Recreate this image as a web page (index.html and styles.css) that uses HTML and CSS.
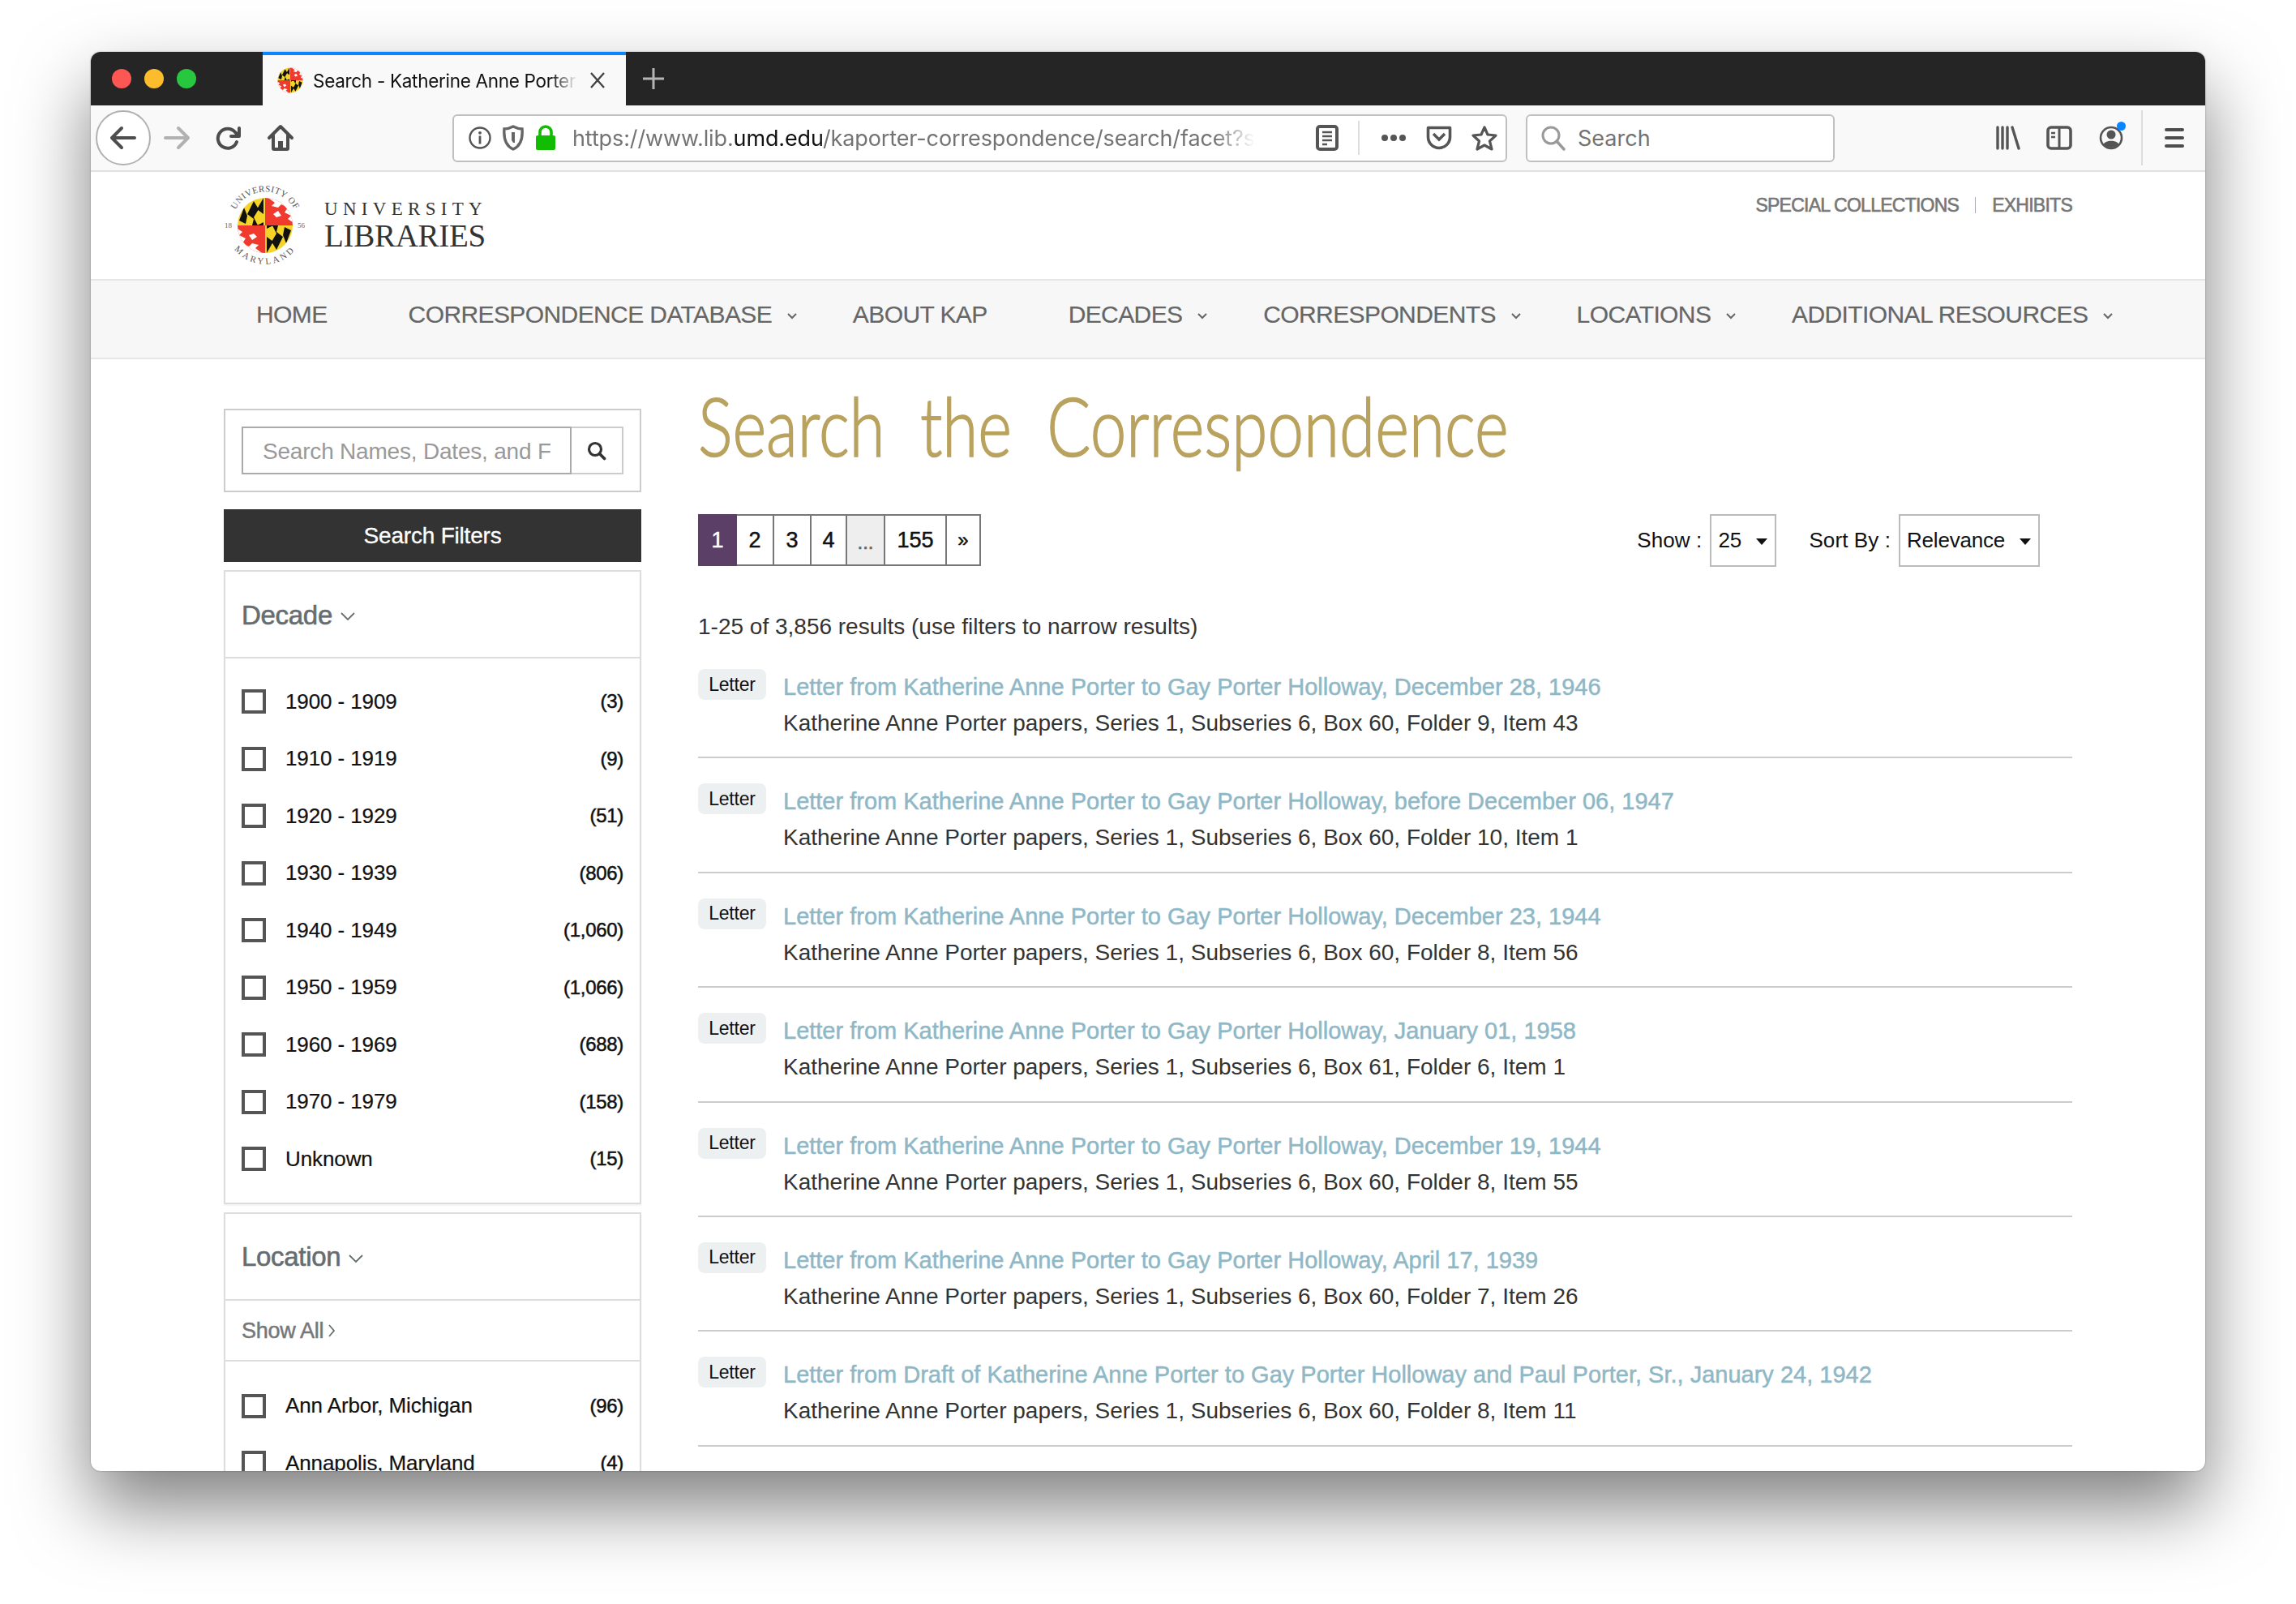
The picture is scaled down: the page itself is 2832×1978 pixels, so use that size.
FILE: index.html
```html
<!DOCTYPE html>
<html lang="en">
<head>
  <meta charset="UTF-8">
  <title>Search - Katherine Anne Porter</title>
  <link rel="stylesheet" href="styles.css">
</head>
<body>
  <svg class="defs" width="0" height="0">
    <defs>
      <clipPath id="globeClip"><circle cx="0" cy="0" r="34"/></clipPath>
      <symbol id="globe" viewBox="-35 -35 70 70">
        <g clip-path="url(#globeClip)">
          <rect x="-35" y="-35" width="35" height="35" fill="#f5d327"/>
          <rect x="0" y="0" width="35" height="35" fill="#f5d327"/>
          <rect x="0" y="-35" width="35" height="35" fill="#ef3a2d"/>
          <rect x="-35" y="0" width="35" height="35" fill="#ef3a2d"/>
          <path d="M-2-34L-10-20-2-14V-4L-10 0H-2L-2-34ZM-14-30L-22-14-14-8-16 0H-9L-14-10-8-20ZM-26-22L-32-6-24-2-22-12Z" fill="#111"/>
          <path d="M2 34L10 20 2 14V4L10 0H2L2 34ZM14 30L22 14 14 8 16 0H9L14 10 8 20ZM26 22L32 6 24 2 22 12Z" fill="#111"/>
          <path d="M4-34L12-28 8-24 16-22 20-26 28-22 24-16 32-12 28-8 34-4V-34ZM10-14L16-18 20-12 14-10Z" fill="#fff"/>
          <path d="M-4 34L-12 28-8 24-16 22-20 26-28 22-24 16-32 12-28 8-34 4V34ZM-10 14L-16 18-20 12-14 10Z" fill="#fff"/>
        </g>
      </symbol>
    </defs>
  </svg>

  <div class="window">
    <div class="tabbar">
      <div class="traffic">
        <span class="light red"></span>
        <span class="light amber"></span>
        <span class="light green"></span>
      </div>
      <div class="tab">
        <svg class="favicon" width="32" height="32"><use href="#globe"/></svg>
        <span class="tab-title">Search - Katherine Anne Porter</span>
        <svg class="tab-close" width="22" height="22" viewBox="0 0 22 22"><path d="M3 2l16 18M19 2L3 20"/></svg>
      </div>
      <svg class="tab-new" width="28" height="28" viewBox="0 0 28 28"><path d="M14 1v26M1 14h26"/></svg>
    </div>

    <div class="toolbar">
      <div class="back-btn">
        <svg width="34" height="30" viewBox="0 0 34 30"><path class="ico" d="M3 15h28M15 3L3 15l12 12"/></svg>
      </div>
      <div class="slot">
        <svg width="34" height="30" viewBox="0 0 34 30"><path class="ico faded" d="M3 15h28M19 3l12 12-12 12"/></svg>
      </div>
      <div class="slot">
        <svg width="32" height="30" viewBox="0 0 32 30"><path class="ico" d="M26 20a12 12 0 1 1-2-12l4 4M29 3v10H19"/></svg>
      </div>
      <div class="slot">
        <svg width="34" height="34" viewBox="0 0 34 34"><path class="ico" d="M3 17L17 3l14 14M8 14v16a1 1 0 0 0 1 1h16a1 1 0 0 0 1-1V14"/><rect x="14" y="21" width="6" height="10" fill="#4d4d4d"/></svg>
      </div>

      <div class="urlbar">
        <svg class="url-ico" width="28" height="28" viewBox="0 0 28 28"><circle cx="14" cy="14" r="12.5" fill="none" stroke="#555" stroke-width="2.4"/><rect x="12.6" y="11.5" width="2.8" height="10" fill="#555"/><circle cx="14" cy="7.8" r="1.9" fill="#555"/></svg>
        <svg class="url-ico" width="26" height="32" viewBox="0 0 26 32"><path d="M13 2c4 2 8 3 11 3 1 12-2 21-11 25C4 26 1 17 2 5c3 0 7-1 11-3z" fill="none" stroke="#666" stroke-width="3.4"/><path d="M11 9h4v13h-2l-2-3z" fill="#666"/></svg>
        <svg class="url-ico" width="26" height="32" viewBox="0 0 26 32"><path d="M6 14V9a7 7 0 0 1 14 0v5" fill="none" stroke="#12bc00" stroke-width="3.6"/><rect x="1" y="13" width="24" height="18" rx="2" fill="#12bc00"/></svg>
        <span class="url-text">https://www.lib.<b>umd.edu</b>/kaporter-correspondence/search/facet?s</span>
        <svg class="url-ico reader" width="28" height="32" viewBox="0 0 28 32"><rect x="2" y="2" width="24" height="28" rx="3" fill="none" stroke="#555" stroke-width="4"/><path d="M8 9h12M8 14h12M8 19h12M8 24h6" stroke="#555" stroke-width="2.4"/></svg>
        <span class="url-sep"></span>
        <svg class="url-ico dots" width="32" height="10" viewBox="0 0 32 10"><circle cx="5" cy="5" r="4" fill="#555"/><circle cx="16" cy="5" r="4" fill="#555"/><circle cx="27" cy="5" r="4" fill="#555"/></svg>
        <svg class="url-ico pocket" width="32" height="30" viewBox="0 0 32 30"><path d="M2.500 2.500h27v11.500a13.500 13.500 0 0 1-27 0z" fill="none" stroke="#555" stroke-width="3.6" stroke-linejoin="round"/><path d="M9 10l7 7 7-7" fill="none" stroke="#555" stroke-width="3.4"/></svg>
        <svg class="url-ico star" width="32" height="32" viewBox="0 0 32 32"><path d="M16 3l4 9 10 1-7.500 7 2.500 10-9-5-9 5 2.500-10L2 13l10-1z" fill="none" stroke="#555" stroke-width="3.2" stroke-linejoin="round"/></svg>
      </div>

      <div class="searchbar">
        <svg width="32" height="32" viewBox="0 0 32 32"><circle cx="13" cy="13" r="10" fill="none" stroke="#999" stroke-width="3"/><path d="M20 20l9 10" stroke="#999" stroke-width="3.400" stroke-linecap="round"/></svg>
        <span>Search</span>
      </div>

      <div class="tool-right">
        <svg width="32" height="30" viewBox="0 0 32 30"><path d="M3 2v26M9 2v26M15 2v26M21 2l8 26" fill="none" stroke="#555" stroke-width="3.4" stroke-linecap="round"/></svg>
        <svg width="32" height="30" viewBox="0 0 32 30"><rect x="2" y="2" width="28" height="26" rx="4" fill="none" stroke="#555" stroke-width="3.6"/><path d="M16 2v26" stroke="#555" stroke-width="3"/><path d="M6 9h5M6 14h5" stroke="#555" stroke-width="2.400"/></svg>
        <span class="account">
          <svg width="30" height="30" viewBox="0 0 30 30"><circle cx="15" cy="15" r="13" fill="none" stroke="#555" stroke-width="2.600"/><circle cx="15" cy="11" r="5.500" fill="#555"/><path d="M5 24c2-7 18-7 20 0-5 4-15 4-20 0z" fill="#555"/></svg>
          <span class="badge-dot"></span>
        </span>
        <span class="tool-sep"></span>
        <div class="burger"><span></span><span></span><span></span></div>
      </div>
    </div>

    <div class="site-header">
      <div class="logo">
        <svg class="seal" width="100" height="100" viewBox="-50 -50 100 100">
          <defs>
            <path id="arcTop" d="M-39 12A41 41 0 1 1 39 12"/>
            <path id="arcBottom" d="M-46-14A48 48 0 1 0 46-14"/>
          </defs>
          <use href="#globe" x="-35" y="-35" width="70" height="70"/>
          <text class="seal-text"><textPath href="#arcTop" startOffset="50%" text-anchor="middle">UNIVERSITY OF</textPath></text>
          <text class="seal-text seal-text-low"><textPath href="#arcBottom" startOffset="50%" text-anchor="middle">MARYLAND</textPath></text>
          <text class="seal-year" x="-50" y="3">18</text>
          <text class="seal-year" x="40" y="3">56</text>
        </svg>
        <div class="logo-text">
          <div class="logo-uni">UNIVERSITY</div>
          <div class="logo-lib">LIBRARIES</div>
        </div>
      </div>
      <div class="top-links">
        <a>SPECIAL COLLECTIONS</a>
        <span class="pipe"></span>
        <a>EXHIBITS</a>
      </div>
    </div>

    <div class="nav">
      <a class="nav-link">HOME</a>
      <a class="nav-link drop">CORRESPONDENCE DATABASE <svg class="caret" width="12" height="8" viewBox="0 0 12 8"><path d="M1 1l5 5 5-5"/></svg></a>
      <a class="nav-link">ABOUT KAP</a>
      <a class="nav-link drop">DECADES <svg class="caret" width="12" height="8" viewBox="0 0 12 8"><path d="M1 1l5 5 5-5"/></svg></a>
      <a class="nav-link drop">CORRESPONDENTS <svg class="caret" width="12" height="8" viewBox="0 0 12 8"><path d="M1 1l5 5 5-5"/></svg></a>
      <a class="nav-link drop">LOCATIONS <svg class="caret" width="12" height="8" viewBox="0 0 12 8"><path d="M1 1l5 5 5-5"/></svg></a>
      <a class="nav-link drop">ADDITIONAL RESOURCES <svg class="caret" width="12" height="8" viewBox="0 0 12 8"><path d="M1 1l5 5 5-5"/></svg></a>
    </div>

    <div class="content">
      <div class="sidebar">
        <div class="search-box">
          <input class="search-input" type="text" placeholder="Search Names, Dates, and Full Text">
          <div class="search-btn">
            <svg width="24" height="24" viewBox="0 0 24 24"><circle cx="10" cy="10" r="7.500" fill="none" stroke="#333" stroke-width="3.200"/><path d="M15.500 15.500l6 6" stroke="#333" stroke-width="3.800" stroke-linecap="round"/></svg>
          </div>
        </div>
        <div class="filters-title">Search Filters</div>

        <div class="panel">
          <div class="panel-head">Decade <svg class="panel-caret" width="18" height="11" viewBox="0 0 18 11"><path d="M1 1l8 8 8-8"/></svg></div>
          <div class="panel-list">
            <div class="facet"><span class="check"></span><span class="facet-name">1900 - 1909</span><span class="facet-count">(3)</span></div>
            <div class="facet"><span class="check"></span><span class="facet-name">1910 - 1919</span><span class="facet-count">(9)</span></div>
            <div class="facet"><span class="check"></span><span class="facet-name">1920 - 1929</span><span class="facet-count">(51)</span></div>
            <div class="facet"><span class="check"></span><span class="facet-name">1930 - 1939</span><span class="facet-count">(806)</span></div>
            <div class="facet"><span class="check"></span><span class="facet-name">1940 - 1949</span><span class="facet-count">(1,060)</span></div>
            <div class="facet"><span class="check"></span><span class="facet-name">1950 - 1959</span><span class="facet-count">(1,066)</span></div>
            <div class="facet"><span class="check"></span><span class="facet-name">1960 - 1969</span><span class="facet-count">(688)</span></div>
            <div class="facet"><span class="check"></span><span class="facet-name">1970 - 1979</span><span class="facet-count">(158)</span></div>
            <div class="facet"><span class="check"></span><span class="facet-name">Unknown</span><span class="facet-count">(15)</span></div>
          </div>
        </div>

        <div class="panel">
          <div class="panel-head">Location <svg class="panel-caret" width="18" height="11" viewBox="0 0 18 11"><path d="M1 1l8 8 8-8"/></svg></div>
          <div class="panel-showall">Show All <svg class="showall-caret" width="9" height="16" viewBox="0 0 9 16"><path d="M1 1l6 7-6 7"/></svg></div>
          <div class="panel-list">
            <div class="facet"><span class="check"></span><span class="facet-name">Ann Arbor, Michigan</span><span class="facet-count">(96)</span></div>
            <div class="facet"><span class="check"></span><span class="facet-name">Annapolis, Maryland</span><span class="facet-count">(4)</span></div>
          </div>
        </div>
      </div>

      <div class="main">
        <h1 class="page-title">Search the Correspondence</h1>

        <div class="controls">
          <div class="pager">
            <a class="page active">1</a>
            <a class="page p2">2</a>
            <a class="page p3">3</a>
            <a class="page p4">4</a>
            <a class="page gap">...</a>
            <a class="page p155">155</a>
            <a class="page next">»</a>
          </div>
          <div class="sorters">
            <span class="sort-label">Show :</span>
            <div class="pick pick-show">25<span class="tri"></span></div>
            <span class="sort-label sort-by">Sort By :</span>
            <div class="pick pick-sort">Relevance<span class="tri"></span></div>
          </div>
        </div>

        <div class="result-count">1-25 of 3,856 results (use filters to narrow results)</div>

        <div class="result">
          <span class="type">Letter</span>
          <div class="result-body">
            <a class="result-title">Letter from Katherine Anne Porter to Gay Porter Holloway, December 28, 1946</a>
            <div class="result-sub">Katherine Anne Porter papers, Series 1, Subseries 6, Box 60, Folder 9, Item 43</div>
          </div>
        </div>
        <div class="result">
          <span class="type">Letter</span>
          <div class="result-body">
            <a class="result-title">Letter from Katherine Anne Porter to Gay Porter Holloway, before December 06, 1947</a>
            <div class="result-sub">Katherine Anne Porter papers, Series 1, Subseries 6, Box 60, Folder 10, Item 1</div>
          </div>
        </div>
        <div class="result">
          <span class="type">Letter</span>
          <div class="result-body">
            <a class="result-title">Letter from Katherine Anne Porter to Gay Porter Holloway, December 23, 1944</a>
            <div class="result-sub">Katherine Anne Porter papers, Series 1, Subseries 6, Box 60, Folder 8, Item 56</div>
          </div>
        </div>
        <div class="result">
          <span class="type">Letter</span>
          <div class="result-body">
            <a class="result-title">Letter from Katherine Anne Porter to Gay Porter Holloway, January 01, 1958</a>
            <div class="result-sub">Katherine Anne Porter papers, Series 1, Subseries 6, Box 61, Folder 6, Item 1</div>
          </div>
        </div>
        <div class="result">
          <span class="type">Letter</span>
          <div class="result-body">
            <a class="result-title">Letter from Katherine Anne Porter to Gay Porter Holloway, December 19, 1944</a>
            <div class="result-sub">Katherine Anne Porter papers, Series 1, Subseries 6, Box 60, Folder 8, Item 55</div>
          </div>
        </div>
        <div class="result">
          <span class="type">Letter</span>
          <div class="result-body">
            <a class="result-title">Letter from Katherine Anne Porter to Gay Porter Holloway, April 17, 1939</a>
            <div class="result-sub">Katherine Anne Porter papers, Series 1, Subseries 6, Box 60, Folder 7, Item 26</div>
          </div>
        </div>
        <div class="result">
          <span class="type">Letter</span>
          <div class="result-body">
            <a class="result-title">Letter from Draft of Katherine Anne Porter to Gay Porter Holloway and Paul Porter, Sr., January 24, 1942</a>
            <div class="result-sub">Katherine Anne Porter papers, Series 1, Subseries 6, Box 60, Folder 8, Item 11</div>
          </div>
        </div>
        <div class="result result-cut">
          <span class="type"></span>
        </div>
      </div>
    </div>
  </div>
</body>
</html>
```

FILE: styles.css
```css
html, body {
  margin: 0;
  background: #fff;
}
body {
  padding: 64px 112px;
  height: 1978px;
  box-sizing: border-box;
  overflow: hidden;
  font-family: "Liberation Sans", Arial, sans-serif;
}
.defs {
  position: absolute;
}
.window {
  height: 1750px;
  overflow: hidden;
  background: #fff;
  border-radius: 12px;
  box-shadow: 0 44px 90px rgba(0, 0, 0, 0.5), 0 0 2px rgba(0, 0, 0, 0.4);
}

/* browser chrome */
.tabbar {
  height: 66px;
  background: #252525;
  display: flex;
  align-items: stretch;
}
.traffic {
  width: 212px;
  display: flex;
  align-items: center;
  gap: 16px;
  padding-left: 26px;
  box-sizing: border-box;
}
.light {
  width: 24px;
  height: 24px;
  border-radius: 50%;
}
.red { background: #fc5753; }
.amber { background: #fdbc2c; }
.green { background: #27c83f; }
.tab {
  width: 448px;
  background: #f9f9f9;
  border-top: 4px solid #0a84ff;
  box-sizing: border-box;
  display: flex;
  align-items: center;
  padding-left: 18px;
}
.favicon {
  flex: none;
}
.tab-title {
  margin-left: 12px;
  width: 326px;
  flex: none;
  overflow: hidden;
  white-space: nowrap;
  font-family: Inter, "Liberation Sans", sans-serif;
  font-size: 22.5px;
  letter-spacing: -0.3px;
  color: #111;
  -webkit-mask-image: linear-gradient(to right, #000 90%, transparent);
  mask-image: linear-gradient(to right, #000 90%, transparent);
}
.tab-close {
  margin-left: 14px;
  flex: none;
}
.tab-close path {
  fill: none;
  stroke: #444;
  stroke-width: 2.4;
}
.tab-new {
  align-self: center;
  margin-left: 20px;
}
.tab-new path {
  fill: none;
  stroke: #b5b5b5;
  stroke-width: 3;
}
.toolbar {
  height: 82px;
  box-sizing: border-box;
  background: #f9f9f9;
  border-bottom: 2px solid #e1e1e1;
  display: flex;
  align-items: center;
  padding-left: 6px;
}
.back-btn {
  width: 68px;
  height: 68px;
  box-sizing: border-box;
  border: 2px solid #b1b1b1;
  border-radius: 50%;
  background: #fff;
  display: flex;
  align-items: center;
  justify-content: center;
  flex: none;
}
.slot {
  width: 64px;
  display: flex;
  justify-content: center;
  flex: none;
}
.ico {
  fill: none;
  stroke: #4d4d4d;
  stroke-width: 4;
  stroke-linecap: round;
  stroke-linejoin: round;
}
.ico.faded {
  stroke: #b1b1b1;
}
.urlbar {
  margin-left: 180px;
  width: 1301px;
  height: 59px;
  box-sizing: border-box;
  flex: none;
  background: #fff;
  border: 2px solid #c0c0c0;
  border-radius: 6px;
  display: flex;
  align-items: center;
  padding-left: 18px;
}
.url-ico {
  flex: none;
  margin-right: 14px;
}
.url-text {
  width: 842px;
  flex: none;
  margin-left: 6px;
  overflow: hidden;
  white-space: nowrap;
  font-family: Inter, "Liberation Sans", sans-serif;
  font-size: 27px;
  letter-spacing: -0.12px;
  color: #737373;
  -webkit-mask-image: linear-gradient(to right, #000 94%, transparent);
  mask-image: linear-gradient(to right, #000 94%, transparent);
}
.url-text b {
  font-weight: 400;
  color: #111;
}
.reader {
  margin-left: 75px;
  margin-right: 24px;
}
.url-sep {
  width: 2px;
  height: 42px;
  background: #ddd;
  flex: none;
  margin-right: 26px;
}
.dots {
  margin-right: 24px;
}
.pocket {
  margin-right: 24px;
}
.star {
  margin-right: 0;
}
.searchbar {
  margin-left: 23px;
  width: 381px;
  height: 59px;
  box-sizing: border-box;
  flex: none;
  background: #fff;
  border: 2px solid #c0c0c0;
  border-radius: 6px;
  display: flex;
  align-items: center;
  gap: 14px;
  padding-left: 16px;
  font-family: Inter, "Liberation Sans", sans-serif;
  font-size: 27px;
  color: #737373;
}
.tool-right {
  display: flex;
  align-items: center;
  margin-left: 198px;
  flex: none;
}
.tool-right > svg {
  margin-right: 31px;
}
.account {
  position: relative;
  display: flex;
  margin-left: 2px;
  margin-right: 22px;
}
.badge-dot {
  position: absolute;
  top: -5px;
  right: -3px;
  width: 11px;
  height: 11px;
  background: #0a84ff;
  border-radius: 50%;
}
.tool-sep {
  width: 2px;
  height: 68px;
  background: #dcdcdc;
  margin-right: 27px;
}
.burger {
  display: flex;
  flex-direction: column;
  gap: 6px;
}
.burger span {
  display: block;
  width: 24px;
  height: 4px;
  background: #4d4d4d;
  border-radius: 2px;
}

/* site header */
.site-header {
  height: 134px;
  box-sizing: border-box;
  border-bottom: 2px solid #e6e6e6;
  padding: 16px 164px 0;
  display: flex;
  justify-content: space-between;
  align-items: flex-start;
}
.logo {
  display: flex;
  align-items: flex-start;
  gap: 23px;
}
.seal {
  flex: none;
  margin-left: 1px;
  overflow: visible;
}
.seal-text {
  font-family: "Liberation Serif", serif;
  font-size: 11px;
  letter-spacing: 0.6px;
  fill: #555;
}
.seal-text-low {
  letter-spacing: 3px;
}
.seal-year {
  font-family: "Liberation Serif", serif;
  font-size: 9px;
  fill: #666;
}
.logo-text {
  color: #333;
  font-family: "Liberation Serif", serif;
  padding-top: 17px;
}
.logo-uni {
  font-size: 23px;
  line-height: 26px;
  letter-spacing: 6.3px;
}
.logo-lib {
  font-size: 39px;
  line-height: 40px;
  letter-spacing: -0.3px;
}
.top-links {
  display: flex;
  align-items: center;
  margin-top: 5px;
  font-size: 23px;
  line-height: 40px;
  letter-spacing: -0.75px;
  color: #777;
  -webkit-text-stroke: 0.6px #777;
}
.pipe {
  width: 1px;
  height: 20px;
  background: #aab;
  margin: 0 20px;
}

/* nav */
.nav {
  height: 97px;
  box-sizing: border-box;
  background: #f7f7f7;
  border-bottom: 2px solid #e6e6e6;
  display: flex;
  align-items: center;
  padding: 0 0 11px 154px;
}
.nav-link {
  padding: 0 50px;
  font-size: 30px;
  letter-spacing: -0.6px;
  color: #666;
  white-space: nowrap;
  -webkit-text-stroke: 0.2px #666;
}
.nav-link.drop {
  padding-right: 19px;
}
.caret {
  margin-left: 11px;
  vertical-align: 4px;
}
.caret path {
  fill: none;
  stroke: #666;
  stroke-width: 2;
}

/* page content */
.content {
  display: flex;
  padding: 0 164px;
  gap: 70px;
  align-items: flex-start;
}
.sidebar {
  width: 515px;
  flex: none;
  margin-top: 61px;
}
.search-box {
  height: 103px;
  box-sizing: border-box;
  border: 2px solid #ccc;
  padding: 20px 20px;
  display: flex;
}
.search-input {
  width: 407px;
  height: 59px;
  box-sizing: border-box;
  border: 2px solid #aaa;
  border-radius: 0;
  outline: none;
  padding: 2px 24px 0;
  font-family: "Liberation Sans", Arial, sans-serif;
  font-size: 28px;
  letter-spacing: -0.2px;
}
.search-input::placeholder {
  color: #999;
  opacity: 1;
}
.search-btn {
  flex: 1;
  box-sizing: border-box;
  border: 2px solid #ccc;
  border-left: 0;
  display: flex;
  align-items: center;
  justify-content: center;
}
.filters-title {
  margin-top: 21px;
  height: 65px;
  line-height: 65px;
  background: #333;
  color: #fff;
  text-align: center;
  font-size: 28px;
  letter-spacing: -0.2px;
  -webkit-text-stroke: 0.3px #fff;
}
.panel {
  border: 2px solid #ddd;
  margin-top: 10px;
  box-shadow: 0 2px 2px rgba(0, 0, 0, 0.05);
}
.panel-head {
  height: 107px;
  box-sizing: border-box;
  display: flex;
  align-items: center;
  gap: 10px;
  padding: 2px 0 0 20px;
  border-bottom: 2px solid #ddd;
  font-size: 33px;
  letter-spacing: -0.3px;
  color: #666d70;
  -webkit-text-stroke: 0.6px #666d70;
}
.panel-caret {
  margin-top: 4px;
}
.panel-caret path,
.showall-caret path {
  fill: none;
  stroke: #666d70;
  stroke-width: 1.8;
}
.panel-showall {
  height: 75px;
  box-sizing: border-box;
  display: flex;
  align-items: center;
  gap: 6px;
  padding: 2px 0 0 20px;
  border-bottom: 2px solid #ddd;
  font-size: 27px;
  letter-spacing: -0.3px;
  color: #777;
  -webkit-text-stroke: 0.5px #777;
}
.panel-list {
  padding: 18px 0 0;
}
.panel-showall + .panel-list {
  padding-top: 20px;
}
.panel-list .facet:last-child {
  margin-bottom: 18px;
}
.facet {
  height: 70.5px;
  display: flex;
  align-items: center;
  padding: 0 20px;
  font-size: 26px;
  letter-spacing: -0.1px;
  color: #111;
  -webkit-text-stroke: 0.2px #111;
}
.check {
  width: 30px;
  height: 30px;
  box-sizing: border-box;
  border: 4px solid #555;
  flex: none;
  margin-right: 24px;
}
.facet-name {
  flex: 1;
}
.facet-count {
  font-size: 24px;
  letter-spacing: -0.3px;
  -webkit-text-stroke: 0.5px #111;
}

/* results */
.main {
  flex: 1;
  min-width: 0;
  padding-top: 30px;
}
.page-title {
  margin: 0 0 31px;
  height: 130px;
  line-height: 102px;
  font-family: Lato, "Liberation Sans", sans-serif;
  font-size: 100px;
  font-weight: 300;
  word-spacing: 27px;
  color: #b9a25e;
  white-space: nowrap;
  -webkit-text-stroke: 1.6px #b9a25e;
  transform: scaleX(0.8);
  transform-origin: left center;
}
.controls {
  display: flex;
  justify-content: space-between;
  height: 65px;
}
.pager {
  display: flex;
  height: 64px;
  box-sizing: border-box;
  border-top: 2px solid #777;
  border-bottom: 2px solid #777;
  border-right: 2px solid #777;
}
.page {
  box-sizing: border-box;
  border-left: 2px solid #777;
  display: flex;
  align-items: center;
  justify-content: center;
  font-size: 27px;
  color: #111;
  -webkit-text-stroke: 0.5px #111;
}
.page.active {
  width: 48px;
  margin-top: -2px;
  margin-bottom: -2px;
  background: #5c3f66;
  border-left: 0;
  color: #fff;
  -webkit-text-stroke: 0.5px #fff;
}
.p2 { width: 44px; border-left: 0; }
.p3 { width: 46px; }
.p4 { width: 44px; }
.page.gap {
  width: 47px;
  background: #eee;
  color: #666;
  -webkit-text-stroke: 0.6px #666;
  font-size: 24px;
  padding-top: 6px;
}
.p155 { width: 76px; }
.next { width: 42px; font-size: 24px; }
.sorters {
  display: flex;
  align-items: center;
  margin-right: 40px;
  font-size: 26px;
  color: #111;
}
.sort-label {
  letter-spacing: 0.1px;
}
.sort-by {
  margin-left: 40px;
}
.pick {
  height: 65px;
  box-sizing: border-box;
  border: 2px solid #bbb;
  display: flex;
  align-items: center;
  padding-left: 8px;
  position: relative;
  margin-left: 10px;
  letter-spacing: -0.2px;
}
.pick-show { width: 82px; }
.pick-sort { width: 174px; }
.tri {
  position: absolute;
  right: 9px;
  top: 28px;
  width: 0;
  height: 0;
  border-left: 7.5px solid transparent;
  border-right: 7.5px solid transparent;
  border-top: 8px solid #111;
}
.result-count {
  margin-top: 54px;
  height: 41px;
  line-height: 40px;
  font-size: 28px;
  color: #333;
}
.result {
  height: 141.4px;
  box-sizing: border-box;
  padding-top: 31px;
  border-bottom: 2px solid #ccc;
  display: flex;
  align-items: flex-start;
}
.result-cut {
  border-bottom: 0;
}
.type {
  width: 84px;
  height: 38px;
  flex: none;
  background: #ecf0f1;
  border-radius: 8px;
  display: flex;
  align-items: center;
  justify-content: center;
  font-size: 23px;
  letter-spacing: -0.2px;
  color: #111;
}
.result-body {
  margin-left: 21px;
}
.result-title {
  display: block;
  line-height: 45px;
  font-size: 29px;
  color: #8fb8c6;
  -webkit-text-stroke: 0.5px #8fb8c6;
}
.result-sub {
  line-height: 44px;
  font-size: 28px;
  color: #333;
}
```
